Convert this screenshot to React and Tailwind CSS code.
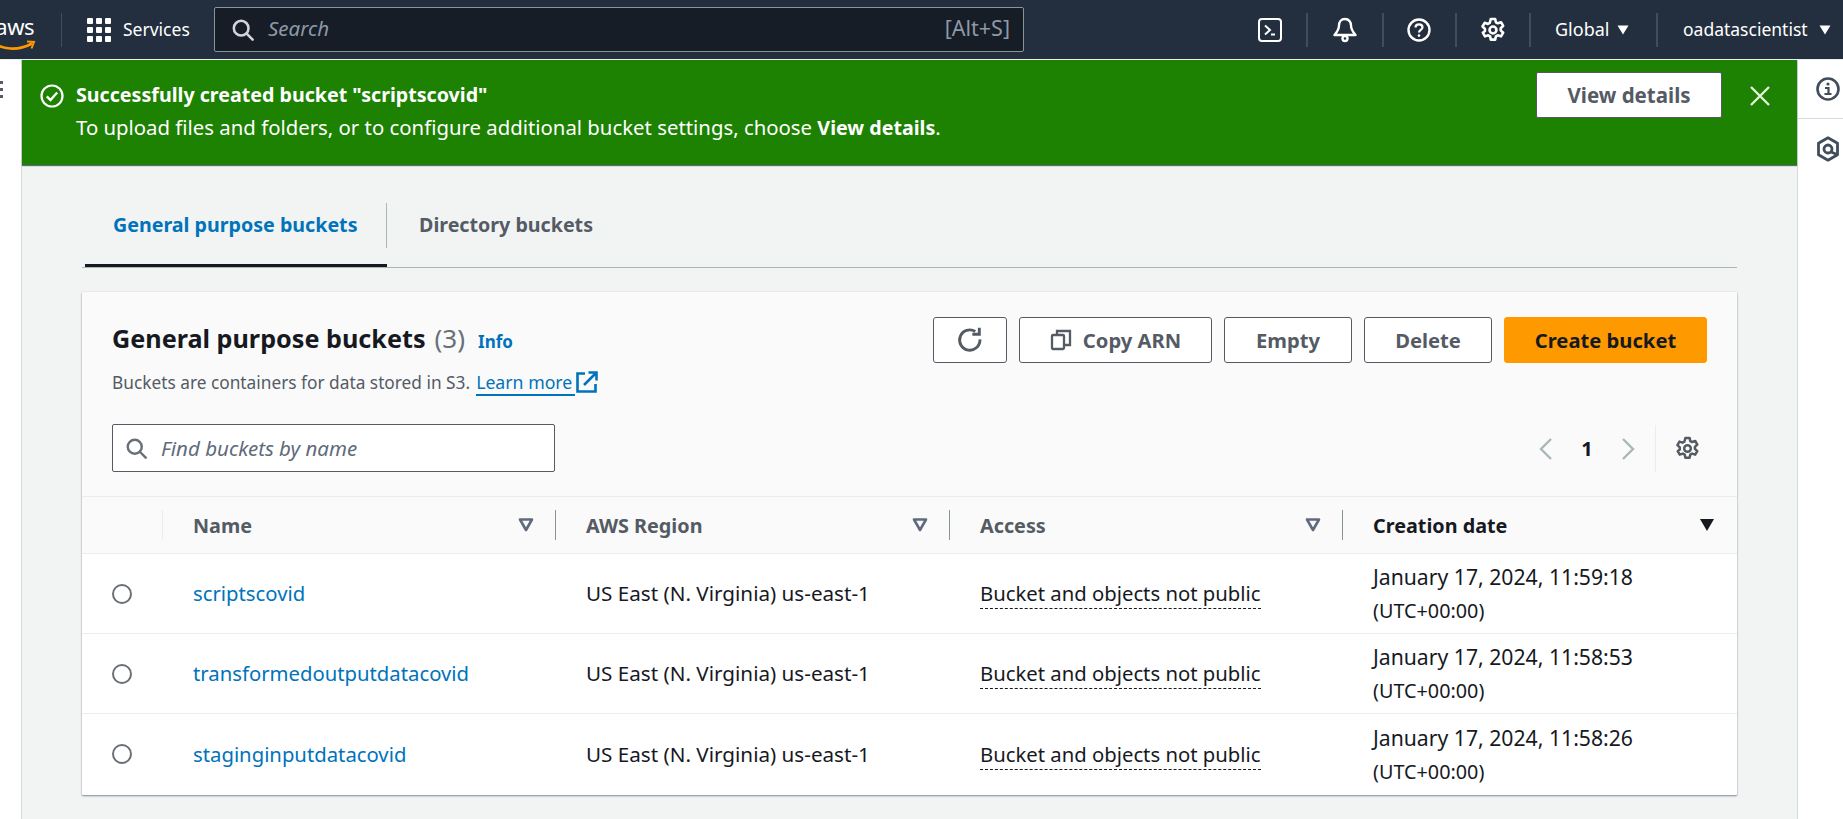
import React from "react";

const F = { fontFamily: '"Noto Sans", "Open Sans", sans-serif' };

const Sep = ({ cls = "" }) => <div className={`w-[2px] h-[34px] bg-[#414d5c] ${cls}`} />;

const Caret = ({ cls = "" }) => (
  <svg viewBox="0 0 12 10" className={`w-[12px] h-[10px] ${cls}`}><path d="M0.5 0.5h11L6 9.5z" fill="currentColor" /></svg>
);

const Gear = ({ cls = "" }) => (
  <svg viewBox="0 0 24 24" className={cls} fill="none" stroke="currentColor" strokeWidth="2.4" strokeLinejoin="round">
    <path d="M10 1.800h4l.7 3.100 1.700.9 3-1 2 3.400-2.300 2.200v1.900l2.300 2.200-2 3.400-3-1-1.700.9-.7 3.100h-4l-.7-3.100-1.700-.9-3 1-2-3.400L4.600 12.900v-1.900L2.300 8.800l2-3.400 3 1 1.700-.9z" />
    <circle cx="12" cy="12" r="3.200" />
  </svg>
);

const SearchIcon = ({ cls = "" }) => (
  <svg viewBox="0 0 24 24" className={cls} fill="none" stroke="currentColor" strokeWidth="2.800" strokeLinecap="round">
    <circle cx="10" cy="10" r="8" /><path d="M16 16l6.500 6.500" />
  </svg>
);

const Filter = () => (
  <svg viewBox="0 0 16 14" className="w-[16px] h-[14px] text-[#5f6b7a]"><path d="M2 1.500h12L8 12z" fill="none" stroke="currentColor" strokeWidth="2.600" strokeLinejoin="round" /></svg>
);

function TopBar() {
  return (
    <header className="h-[59px] shrink-0 bg-[#232f3e] flex items-center text-white">
      <div className="w-[36px] h-[44px] overflow-hidden flex justify-end shrink-0">
        <div className="relative w-[50px] shrink-0">
          <span className="absolute right-[2px] top-[6px] text-[22px] leading-[24px] tracking-[-0.5px]">aws</span>
          <svg viewBox="0 0 50 12" className="absolute right-0 top-[32px] w-[50px] h-[12px]">
            <path d="M4 1c12 9 28 10 41 3" fill="none" stroke="#f90" strokeWidth="2.600" strokeLinecap="round" />
            <path d="M41 1.500l7 .5-2.500 6.500" fill="none" stroke="#f90" strokeWidth="2" />
          </svg>
        </div>
      </div>
      <div className="w-[1px] h-[34px] bg-[#414d5c] ml-[25px]" />
      <div className="grid grid-cols-3 gap-[3px] w-[24px] h-[24px] ml-[25px]">
        {Array.from({ length: 9 }).map((_, i) => <span key={i} className="bg-white rounded-[1px]" />)}
      </div>
      <span className="ml-[12px] text-[17.500px] leading-[24px] -mt-[2px] w-[67px] whitespace-nowrap">Services</span>
      <div className="ml-[24px] w-[810px] h-[45px] rounded-[2px] border border-[#879596] bg-[#161d26] flex items-center pl-[17px] pr-[13px]">
        <SearchIcon cls="w-[22px] h-[22px] text-[#d1d5db]" />
        <span className="ml-[14px] text-[20.500px] leading-[28px] -mt-[4px] italic text-[#8d99a8]">Search</span>
        <span className="ml-auto text-[21.500px] leading-[28px] -mt-[4px] text-[#8d99a8]">[Alt+S]</span>
      </div>

      <div className="ml-[234px] w-[24px] h-[24px] rounded-[4px] border-[2.500px] border-white flex items-center justify-center shrink-0">
        <svg viewBox="0 0 16 16" className="w-[16px] h-[16px]"><path d="M3 3.500L8 8l-5 4.500" fill="none" stroke="white" strokeWidth="2" /><path d="M9 12.500h4" stroke="white" strokeWidth="2" /></svg>
      </div>
      <Sep cls="ml-[24px]" />
      <svg viewBox="0 0 26 26" className="w-[26px] h-[26px] ml-[24px]" fill="none" stroke="white" strokeWidth="2.400" strokeLinejoin="round">
        <path d="M13 2c-4 0-6 3-6 6.500 0 4-1.500 6-4.500 9.500h21c-3-3.500-4.500-5.500-4.500-9.500C19 5 17 2 13 2z" />
        <circle cx="13" cy="21.500" r="2.500" />
      </svg>
      <Sep cls="ml-[24px]" />
      <svg viewBox="0 0 24 24" className="w-[24px] h-[24px] ml-[23px]" fill="none" stroke="white" strokeWidth="2.400">
        <circle cx="12" cy="12" r="10.500" />
        <path d="M8.500 9.500c0-2 1.500-3.200 3.500-3.200s3.500 1.200 3.500 3c0 2.700-3.500 2.500-3.500 5.200" strokeWidth="2.200" />
        <circle cx="12" cy="17.600" r="1.300" fill="white" stroke="none" />
      </svg>
      <Sep cls="ml-[24px]" />
      <Gear cls="w-[26px] h-[26px] ml-[23px] text-white" />
      <Sep cls="ml-[23px]" />
      <span className="ml-[24px] w-[53px] text-[18px] leading-[24px] -mt-[2px]">Global</span>
      <Caret cls="ml-[9px] text-white" />
      <Sep cls="ml-[27px]" />
      <span className="ml-[25px] w-[126px] text-[17.500px] leading-[24px] -mt-[2px] whitespace-nowrap">oadatascientist</span>
      <Caret cls="ml-[10px] text-white" />
    </header>
  );
}

function Banner() {
  return (
    <div className="h-[105px] bg-[#1d8102] flex items-start text-white shadow-[0_1px_1px_#5f6b7a] relative">
      <svg viewBox="0 0 24 24" className="w-[24px] h-[24px] ml-[18px] mt-[24px] shrink-0" fill="none" stroke="white" strokeWidth="2.200">
        <circle cx="12" cy="12" r="10.500" /><path d="M6.800 12.300l3.700 3.700 6.700-7.500" strokeWidth="2.400" />
      </svg>
      <div className="ml-[12px] mt-[19px]">
        <div className="text-[19.650px] leading-[32px] font-bold">Successfully created bucket "scriptscovid"</div>
        <div className="text-[20.350px] leading-[33px]">To upload files and folders, or to configure additional bucket settings, choose <b className="text-[19.650px]">View details</b>.</div>
      </div>
      <button className="ml-auto mt-[12px] w-[186px] h-[46px] rounded-[2px] bg-white border border-[#545b64] text-[#545b64] text-[20.500px] font-bold">View details</button>
      <svg viewBox="0 0 22 22" className="w-[22px] h-[22px] ml-[27px] mr-[26px] mt-[25px] shrink-0" fill="none" stroke="#e4eee0" strokeWidth="2.400"><path d="M2 2l18 18M20 2L2 20" /></svg>
    </div>
  );
}

const Btn = ({ w, children, primary }) => (
  <button className={`h-[46px] ${w} rounded-[3px] border text-[20.200px] font-bold flex items-center justify-center ${primary ? "bg-[#ff9900] border-[#ff9900] text-[#16191f]" : "bg-white border-[#545b64] text-[#545b64]"}`}>
    {children}
  </button>
);

const rows = [
  ["scriptscovid", "January 17, 2024, 11:59:18"],
  ["transformedoutputdatacovid", "January 17, 2024, 11:58:53"],
  ["staginginputdatacovid", "January 17, 2024, 11:58:26"],
];

const cols = "grid grid-cols-[81px_393px_394px_393px_394px]";

function Card() {
  return (
    <section className="ml-[60px] mt-[24px] w-[1655px] h-[503px] bg-white shadow-[0_1px_2px_#7d8998,0_0_1px_#c5cbd1] rounded-[1px] overflow-hidden">
      <div className="h-[204px] bg-[#fafafa] relative flex justify-between">
        <div className="pl-[30px] pt-[27px]">
          <div className="flex items-baseline h-[38px]">
            <h2 className="text-[25.200px] leading-[38px] font-bold text-[#16191f] whitespace-nowrap">General purpose buckets</h2>
            <span className="ml-[9px] text-[26px] leading-[38px] text-[#687078]">(3)</span>
            <span className="ml-[13px] text-[17px] font-bold text-[#0073bb]">Info</span>
          </div>
          <div className="flex items-center text-[17.300px] text-[#545b64] mt-[13px] h-[26px] whitespace-nowrap">
            <span>Buckets are containers for data stored in S3.</span>
            <span className="ml-[6px] pr-[3px] text-[17.700px] text-[#0073bb] border-b-2 border-[#0073bb] leading-[24px]">Learn more</span>
            <svg viewBox="0 0 22 22" className="w-[22px] h-[22px] ml-[1px] mb-[2px]" fill="none" stroke="#0073bb" strokeWidth="2.600">
              <path d="M9 2.500H1.500v18h18V13" /><path d="M8 14L20 2M12.500 1.500h8v8" />
            </svg>
          </div>
          <div className="mt-[28px] w-[443px] h-[48px] rounded-[2px] border border-[#545b64] bg-white flex items-center pl-[13px]">
            <SearchIcon cls="w-[21px] h-[21px] text-[#687078]" />
            <span className="ml-[14px] text-[20.500px] italic text-[#5f6b7a]">Find buckets by name</span>
          </div>
        </div>
        <div className="pr-[30px] pt-[25px] flex flex-col items-end">
          <div className="flex gap-[12px]">
            <Btn w="w-[74px]">
              <svg viewBox="0 0 24 24" className="w-[28px] h-[28px]" fill="none" stroke="currentColor" strokeWidth="2.500">
                <path d="M20.500 11.500a8.700 8.700 0 1 1-4-6.800" /><path d="M20 1.500v5.500h-6" />
              </svg>
            </Btn>
            <Btn w="w-[193px]">
              <svg viewBox="0 0 22 22" className="w-[22px] h-[22px] mr-[11px]" fill="none" stroke="currentColor" strokeWidth="2.300">
                <rect x="2" y="6" width="12" height="14" rx="1" /><path d="M7 6V2h13v14h-6" />
              </svg>
              Copy ARN
            </Btn>
            <Btn w="w-[128px]">Empty</Btn>
            <Btn w="w-[128px]">Delete</Btn>
            <Btn w="w-[203px]" primary>Create bucket</Btn>
          </div>
          <div className="flex items-center mt-[62px] mr-[7px] h-[47px]">
            <svg viewBox="0 0 16 24" className="w-[16px] h-[24px] text-[#aab7b8]" fill="none" stroke="currentColor" strokeWidth="2.400"><path d="M13 2L3 12l10 10" /></svg>
            <span className="w-[66px] text-center text-[20px] font-bold text-[#16191f]">1</span>
            <svg viewBox="0 0 16 24" className="w-[16px] h-[24px] text-[#aab7b8]" fill="none" stroke="currentColor" strokeWidth="2.400"><path d="M3 2l10 10L3 22" /></svg>
            <div className="w-[1px] h-[47px] bg-[#eaeded] ml-[19px]" />
            <Gear cls="w-[25px] h-[25px] ml-[19px] text-[#545b64]" />
          </div>
        </div>
      </div>
      <div className={`${cols} h-[58px] bg-[#fafafa] border-t border-b border-[#eaeded] items-center text-[19.800px] font-bold text-[#545b64]`}>
        <div className="h-[30px] border-r border-[#eaeded]" />
        {["Name", "AWS Region", "Access"].map((h) => (
          <div key={h} className="h-[30px] border-r border-[#879596] flex items-center justify-between pl-[30px] pr-[21px]">
            <span className="mt-[2px]">{h}</span><Filter />
          </div>
        ))}
        <div className="h-[30px] flex items-center justify-between pl-[30px] pr-[22px] text-[#16191f]">
          <span className="mt-[2px]">Creation date</span>
          <svg viewBox="0 0 16 14" className="w-[16px] h-[14px]"><path d="M1 1h14L8 13z" fill="#16191f" /></svg>
        </div>
      </div>
      {rows.map(([name, date], i) => (
        <div key={name} className={`${cols} h-[80px] items-center text-[20.300px] text-[#16191f] ${i < 2 ? "border-b border-[#eaeded]" : ""}`}>
          <div className="flex justify-center pr-[2px]">
            <span className="w-[20px] h-[20px] rounded-full border-2 border-[#687078] bg-white" />
          </div>
          <a className="pl-[30px] text-[#0073bb]">{name}</a>
          <div className="pl-[30px] text-[20.650px]">US East (N. Virginia) us-east-1</div>
          <div className="pl-[30px]"><span className="border-b border-dashed border-[#16191f] pb-[1px]">Bucket and objects not public</span></div>
          <div className="pl-[30px] leading-[33px] text-[19.800px]"><span className="text-[21.200px]">{date}</span><br />(UTC+00:00)</div>
        </div>
      ))}
    </section>
  );
}

export default function App() {
  return (
    <div style={F} className="w-[1843px] h-[819px] overflow-hidden flex flex-col bg-white">
      <TopBar />
      <div className="h-[1px] bg-[#eaeded] shrink-0" />
      <div className="flex flex-1 min-h-0">
        <aside className="w-[22px] shrink-0 bg-white border-r border-[#d5dbdb] pt-[21px]">
          <div className="flex flex-col gap-[4px] -ml-[1px]">
            {[0, 1, 2].map((k) => <span key={k} className="w-[4px] h-[3px] bg-[#545b64]" />)}
          </div>
        </aside>
        <main className="flex-1 min-w-0 bg-[#f2f3f3]">
          <Banner />
          <div className="ml-[60px] mt-[37px] w-[1655px] h-[66px] border-b border-[#aab7b8] flex relative">
            <div className="ml-[3px] w-[302px] h-[65px] border-b-[3px] border-[#16191f] flex">
              <div className="w-full h-[45px] mt-[1px] border-r border-[#aab7b8] flex items-center pl-[28px] text-[19.650px] font-bold text-[#0073bb] whitespace-nowrap"><span className="-mt-[2px]">General purpose buckets</span></div>
            </div>
            <div className="h-[45px] mt-[1px] flex items-center pl-[32px] text-[19.650px] font-bold text-[#545b64]"><span className="-mt-[2px]">Directory buckets</span></div>
          </div>
          <Card />
        </main>
        <aside className="w-[46px] shrink-0 bg-white border-l border-[#d5dbdb]">
          <div className="h-[59px] border-b border-[#d5dbdb] flex items-center pl-[18px]">
            <svg viewBox="0 0 24 24" className="w-[24px] h-[24px] shrink-0" fill="none" stroke="#414d5c" strokeWidth="2.600">
              <circle cx="12" cy="12" r="10.500" /><path d="M9 11h3.500v6M8.500 17h7" strokeWidth="2.200" /><circle cx="12" cy="7" r="1.600" fill="#414d5c" stroke="none" />
            </svg>
          </div>
          <div className="pt-[17px] pl-[18px]">
            <svg viewBox="0 0 24 26" className="w-[24px] h-[26px]" fill="none" stroke="#414d5c" strokeWidth="2.800" strokeLinejoin="round">
              <path d="M12 1.800l9.500 5.500v11.400L12 24.200l-9.500-5.500V7.300z" /><circle cx="12" cy="13" r="4" /><path d="M14 15.500l7 3" />
            </svg>
          </div>
        </aside>
      </div>
    </div>
  );
}
